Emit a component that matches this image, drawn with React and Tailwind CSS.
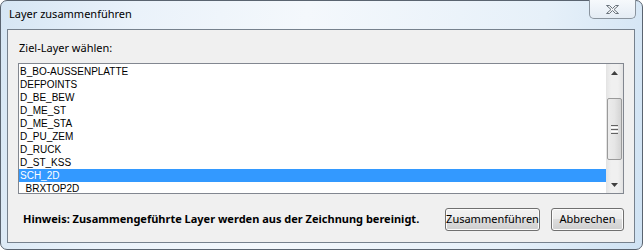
import React from "react";

const items = [
  "B_BO-AUSSENPLATTE",
  "DEFPOINTS",
  "D_BE_BEW",
  "D_ME_ST",
  "D_ME_STA",
  "D_PU_ZEM",
  "D_RUCK",
  "D_ST_KSS",
  "SCH_2D",
  "_BRXTOP2D",
];

const ui = { fontFamily: '"Noto Sans", "Open Sans", Arial, sans-serif' };
const list = { fontFamily: '"Liberation Sans", Arial, sans-serif' };

function Btn({ children, w }) {
  return (
    <div
      className={`h-[23px] ${w} rounded-[3px] border border-[#707070] flex items-center justify-center text-[11px] text-black bg-[linear-gradient(#f2f2f2_0%,#ebebeb_50%,#dddddd_50%,#cfcfcf_100%)] shadow-[inset_0_0_0_1px_#fcfcfc] whitespace-nowrap`}
      style={ui}
    >
      {children}
    </div>
  );
}

export default function App() {
  return (
    <div className="w-[643px] h-[250px] relative overflow-hidden bg-white">
      <div className="w-[643px] h-[250px] rounded-[7px] border border-[#5a6470] bg-[linear-gradient(100deg,#d6e6f4_0%,#eaf2fa_20%,#f4f8fc_45%,#e6f0f9_80%,#cfe2f3_100%)] flex flex-col pl-[6px] pr-[7px] pb-[6px]">
        {/* title bar */}
        <div className="h-[28px] flex items-start relative">
          <div className="pt-[5px] pl-[2px] text-[11px] text-black" style={ui}>
            Layer zusammenführen
          </div>
          <div className="absolute right-[-1px] top-[-1px] w-[47px] h-[19px] rounded-b-[5px] border border-t-0 border-[#8a949e] bg-[linear-gradient(#f6f9fc,#e4ecf4)] flex items-center justify-center">
            <svg width="15" height="11" viewBox="0 0 15 11">
              <path
                d="M1.5 1.5h3l3 3 3-3h3l-4.5 4 4.5 4h-3l-3-3-3 3h-3l4.5-4z"
                fill="#f4f6f8"
                stroke="#6a737c"
                strokeWidth="1"
                strokeLinejoin="round"
              />
            </svg>
          </div>
        </div>
        {/* client */}
        <div className="flex-1 border border-[#76818d] bg-[#f0f0f0] flex flex-col px-[10px] pt-[10px]">
          <div className="text-[11px] text-black leading-[16px] pl-[1px]" style={ui}>
            Ziel-Layer wählen:
          </div>
          <div className="mt-[7px] h-[131px] border border-[#828790] bg-white flex">
            <div className="flex-1 pt-[1px] overflow-hidden text-[10px] text-black" style={list}>
              {items.map((it, i) => (
                <div
                  key={it}
                  className={`h-[13px] leading-[13px] pl-[1px] ${i === 8 ? "bg-[#3399ff] text-white" : ""}`}
                >
                  {it}
                </div>
              ))}
            </div>
            <div className="w-[17px] bg-[linear-gradient(90deg,#e3e3e3,#f0f0f0_30%,#f0f0f0_70%,#e3e3e3)] flex flex-col items-center">
              <div className="h-[17px] flex items-center justify-center">
                <svg width="7" height="4" viewBox="0 0 7 4"><path d="M0 4L3.5 0L7 4z" fill="#404040" /></svg>
              </div>
              <div className="mt-[17px] w-[15px] h-[62px] rounded-[2px] border border-[#9a9a9a] bg-[linear-gradient(90deg,#ececec,#e6e6e6_50%,#d4d4d4)] flex flex-col items-center justify-center gap-[1px]">
                <div className="w-[7px] h-[1px] bg-[#636363]" />
                <div className="w-[7px] h-[1px] bg-[#ffffff]" />
                <div className="w-[7px] h-[1px] bg-[#636363]" />
                <div className="w-[7px] h-[1px] bg-[#ffffff]" />
                <div className="w-[7px] h-[1px] bg-[#636363]" />
              </div>
              <div className="flex-1" />
              <div className="h-[17px] flex items-center justify-center">
                <svg width="7" height="4" viewBox="0 0 7 4"><path d="M0 0L3.5 4L7 0z" fill="#404040" /></svg>
              </div>
            </div>
          </div>
          <div className="flex items-center mt-[14px]">
            <div className="pl-[5px] text-[11px] font-bold text-black flex-1 whitespace-nowrap" style={ui}>
              Hinweis: Zusammengeführte Layer werden aus der Zeichnung bereinigt.
            </div>
            <div className="flex gap-[11px]">
              <Btn w="w-[95px]">Zusammenführen</Btn>
              <Btn w="w-[73px]">Abbrechen</Btn>
            </div>
          </div>
        </div>
      </div>
    </div>
  );
}
